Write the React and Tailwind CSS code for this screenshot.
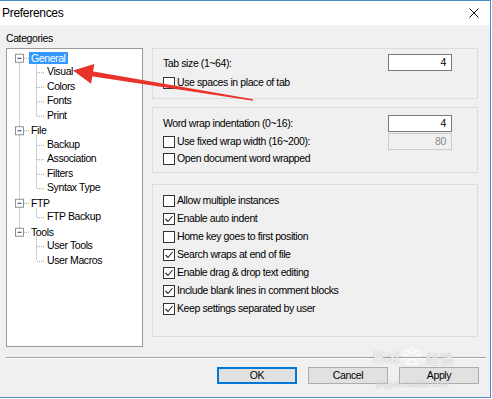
import React from "react";

const font = { fontFamily: '"Liberation Sans", Arial, sans-serif' };

function Check({ checked }) {
  return (
    <div className="w-[12px] h-[12px] border border-[#333333] bg-white shrink-0 flex items-center justify-center">
      {checked && (
        <svg width="10" height="10" viewBox="0 0 10 10">
          <polyline points="1.5,5 4,7.5 8.5,2" fill="none" stroke="#222" strokeWidth="1.1" />
        </svg>
      )}
    </div>
  );
}

function CheckRow({ label, checked, className = "" }) {
  return (
    <div className={"flex items-center gap-[2px] " + className}>
      <Check checked={checked} />
      <span>{label}</span>
    </div>
  );
}

const tree = [
  { t: "General", root: true, sel: true },
  { t: "Visual" },
  { t: "Colors" },
  { t: "Fonts" },
  { t: "Print" },
  { t: "File", root: true },
  { t: "Backup" },
  { t: "Association" },
  { t: "Filters" },
  { t: "Syntax Type" },
  { t: "FTP", root: true },
  { t: "FTP Backup" },
  { t: "Tools", root: true },
  { t: "User Tools" },
  { t: "User Macros" },
];

function TreeLines() {
  const c = (i) => 8.75 + 14.5 * i;
  const roots = [0, 5, 10, 12];
  const groups = [
    [0, 4],
    [5, 9],
    [10, 11],
    [12, 14],
  ];
  const dot = { stroke: "#a0a0a0", strokeWidth: 1, strokeDasharray: "1 1" };
  return (
    <svg className="absolute left-0 top-0" width="135" height="297">
      <line x1="12.5" y1={c(0) + 5} x2="12.5" y2={c(12) - 4} {...dot} />
      {groups.map(([p, last]) => (
        <g key={p}>
          <line x1="29.5" y1={c(p) + 5} x2="29.5" y2={c(last)} {...dot} />
          {Array.from({ length: last - p }, (_, k) => p + 1 + k).map((i) => (
            <line key={i} x1="30" y1={c(i) + 0.5} x2="38" y2={c(i) + 0.5} {...dot} />
          ))}
        </g>
      ))}
      {roots.map((r) => (
        <g key={r}>
          <line x1="17" y1={c(r) + 0.5} x2="22" y2={c(r) + 0.5} {...dot} />
          <rect x="8.5" y={c(r) - 3.5} width="8" height="8" fill="white" stroke="#919191" />
          <line x1="10.5" y1={c(r) + 0.5} x2="14.5" y2={c(r) + 0.5} stroke="#1c3b70" />
        </g>
      ))}
    </svg>
  );
}

export default function App() {
  return (
    <div className="w-[492px] h-[399px] bg-white relative overflow-hidden" style={font}>
      <div className="w-[491px] h-[398px] bg-[#f0f0f0] border-t border-r border-b border-[#4a8ccc] flex flex-col text-[10.5px] tracking-[-0.4px] text-black">
        {/* Title bar */}
        <div className="h-[24px] bg-white flex items-center justify-between pl-[2px] pr-[11px] shrink-0">
          <span className="text-[12px] tracking-[-0.3px]">Preferences</span>
          <svg width="10" height="10" viewBox="0 0 10 10">
            <line x1="0.5" y1="0.5" x2="9.5" y2="9.5" stroke="#111" strokeWidth="1" />
            <line x1="9.5" y1="0.5" x2="0.5" y2="9.5" stroke="#111" strokeWidth="1" />
          </svg>
        </div>

        <div className="px-[6px] flex flex-col">
          <div className="h-[14px] mt-[7px] flex items-center">Categories</div>

          <div className="flex gap-[9px] mt-[2px] items-start">
            {/* Tree */}
            <div className="w-[137px] h-[299px] bg-white border border-[#9a9a9a] relative pt-[1.5px]">
              <TreeLines />
              {tree.map((n) => (
                <div key={n.t} className={"h-[14.5px] flex items-center relative " + (n.root ? "pl-[22px]" : "pl-[40px]")}>
                  {n.root ? (
                    <span className={"px-[2px] leading-[12px] " + (n.sel ? "bg-[#3399ff] text-white" : "")}>{n.t}</span>
                  ) : (
                    <span>{n.t}</span>
                  )}
                </div>
              ))}
            </div>

            {/* Right column */}
            <div className="w-[326px] flex flex-col">
              <div className="h-[51px] border border-[#dcdcdc] pl-[10px] pr-[25px] pt-[5px] flex flex-col">
                <div className="flex items-center justify-between h-[17px]">
                  <span className="pt-[2px]">Tab size (1~64):</span>
                  <div className="w-[64px] h-[17px] border border-[#7a7a7a] bg-white flex items-center justify-end pr-[5px]">4</div>
                </div>
                <CheckRow className="mt-[5px] h-[13px]" label="Use spaces in place of tab" />
              </div>

              <div className="h-[66px] mt-[8px] border border-[#dcdcdc] pl-[10px] pr-[25px] pt-[7px] flex flex-col">
                <div className="flex items-center justify-between h-[17px]">
                  <span>Word wrap indentation (0~16):</span>
                  <div className="w-[64px] h-[17px] border border-[#7a7a7a] bg-white flex items-center justify-end pr-[5px]">4</div>
                </div>
                <div className="flex items-center justify-between h-[17px] mt-[1px]">
                  <CheckRow label="Use fixed wrap width (16~200):" />
                  <div className="w-[64px] h-[17px] border border-[#cccccc] bg-[#f0f0f0] text-[#8c8c8c] flex items-center justify-end pr-[5px]">80</div>
                </div>
                <CheckRow className="mt-[2px] h-[14px]" label="Open document word wrapped" />
              </div>

              <div className="h-[153px] mt-[11px] border border-[#dcdcdc] pl-[10px] pt-[7px] flex flex-col">
                {[
                  ["Allow multiple instances", false],
                  ["Enable auto indent", true],
                  ["Home key goes to first position", false],
                  ["Search wraps at end of file", true],
                  ["Enable drag & drop text editing", true],
                  ["Include blank lines in comment blocks", true],
                  ["Keep settings separated by user", true],
                ].map(([l, c]) => (
                  <CheckRow key={l} className="h-[18px]" label={l} checked={c} />
                ))}
              </div>
            </div>
          </div>

          {/* Separator */}
          <div className="mt-[10px] mr-[-2px] border-t border-[#a0a0a0] border-b border-b-white" />

          {/* Buttons */}
          <div className="flex gap-[11px] pl-[211px] mt-[8px]">
            <div className="w-[80px] h-[17px] border border-[#0078d7] bg-[#e1e1e1] shadow-[inset_0_0_0_1px_#0078d7] flex items-center justify-center">OK</div>
            <div className="w-[80px] h-[17px] border border-[#adadad] bg-[#e1e1e1] flex items-center justify-center">Cancel</div>
            <div className="w-[80px] h-[17px] border border-[#adadad] bg-[#e1e1e1] flex items-center justify-center">Apply</div>
          </div>
        </div>
      </div>

      {/* Red annotation arrow */}
      <svg className="absolute left-0 top-0 pointer-events-none" width="492" height="399">
        <polygon points="73,70.5 94.3,63.9 91.1,83.7" fill="#e8332a" />
        <polygon points="92,71.3 253,99.3 253,100.8 91.5,76.3" fill="#e8332a" />
      </svg>

      {/* Watermark */}
      <div className="absolute left-[373px] top-[347px] flex items-end gap-[1px] text-white/80 pointer-events-none [text-shadow:0_0_1px_rgba(0,0,0,0.35)]">
        <span className="text-[17px] font-bold leading-[18px]">Bai</span>
        <svg width="24" height="20" viewBox="0 0 24 20" className="opacity-80">
          <circle cx="6" cy="6" r="2.5" fill="none" stroke="#fff" strokeWidth="1.5" />
          <circle cx="12" cy="3.5" r="2.5" fill="none" stroke="#fff" strokeWidth="1.5" />
          <circle cx="18" cy="6" r="2.5" fill="none" stroke="#fff" strokeWidth="1.5" />
          <path d="M6 17 Q12 7 18 17 Z" fill="none" stroke="#fff" strokeWidth="1.5" />
        </svg>
        <span className="text-[14px] leading-[18px]" style={{ fontFamily: '"Noto Sans CJK SC", sans-serif' }}>经验</span>
      </div>
      <div className="absolute left-[376px] top-[378px] text-[9px] text-white/80 pointer-events-none [text-shadow:0_0_1px_rgba(0,0,0,0.35)]">
        jingyan.baidu.com
      </div>
    </div>
  );
}
